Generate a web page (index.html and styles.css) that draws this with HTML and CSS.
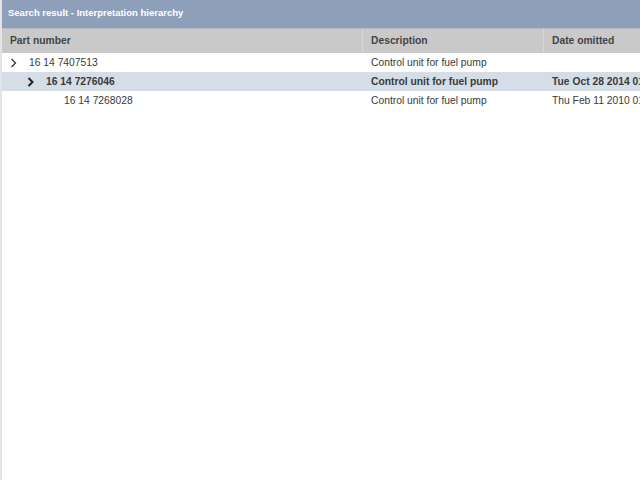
FILE: index.html
```html
<!DOCTYPE html>
<html>
<head>
<meta charset="utf-8">
<link rel="stylesheet" href="styles.css">
</head>
<body>
<div class="panel">
  <div class="titlebar">Search result - Interpretation hierarchy</div>
  <div class="grid">
    <div class="row head">
      <div class="cell c1">Part number</div>
      <div class="cell c2">Description</div>
      <div class="cell c3">Date omitted</div>
    </div>
    <div class="row">
      <div class="cell c1 lvl0"><svg class="chev" width="8" height="10" viewBox="0 0 8 10"><path d="M1.5 1 L5.5 5 L1.5 9" fill="none" stroke="#333" stroke-width="1.3"/></svg>16 14 7407513</div>
      <div class="cell c2">Control unit for fuel pump</div>
      <div class="cell c3"></div>
    </div>
    <div class="row sel">
      <div class="cell c1 lvl1"><svg class="chev" width="8" height="10" viewBox="0 0 8 10"><path d="M1.5 1 L5.5 5 L1.5 9" fill="none" stroke="#222" stroke-width="2"/></svg>16 14 7276046</div>
      <div class="cell c2">Control unit for fuel pump</div>
      <div class="cell c3">Tue Oct 28 2014 01:00:00</div>
    </div>
    <div class="row">
      <div class="cell c1 lvl2">16 14 7268028</div>
      <div class="cell c2">Control unit for fuel pump</div>
      <div class="cell c3">Thu Feb 11 2010 01:00:00</div>
    </div>
  </div>
</div>
</body>
</html>
```
FILE: styles.css
```css
html, body { margin: 0; padding: 0; height: 100%; background: #fff; }
body { font-family: "Liberation Sans", Arial, sans-serif; font-size: 10.3px; color: #3a3a3a; overflow: hidden; }
.panel { height: 100%; border-left: 2px solid #e4e4e4; box-sizing: border-box; width: 640px; overflow: hidden; }
.titlebar { height: 28px; background: #8e9fba; color: #fff; font-weight: bold; font-size: 9.5px; line-height: 25px; padding-left: 6px; white-space: nowrap; }
.grid { width: 700px; }
.row { display: flex; height: 19px; line-height: 20px; white-space: nowrap; }
.row.head { height: 24px; line-height: 23px; background: #c9c9c9; font-weight: bold; color: #444; border-top: 1px solid #b8bcc4; }
.row.sel { background: #d5dde7; font-weight: bold; }
.cell { overflow: hidden; box-sizing: border-box; padding-left: 8px; }
.c1 { width: 361px; }
.c2 { width: 181px; }
.c3 { width: 158px; }
.head .cell { border-right: 1px solid #d8d8d8; }
.chev { display: inline-block; vertical-align: top; margin-top: 5px; margin-right: 11px; }
.lvl0 { padding-left: 8px; }
.lvl1 { padding-left: 25px; }
.lvl2 { padding-left: 62px; }
```
